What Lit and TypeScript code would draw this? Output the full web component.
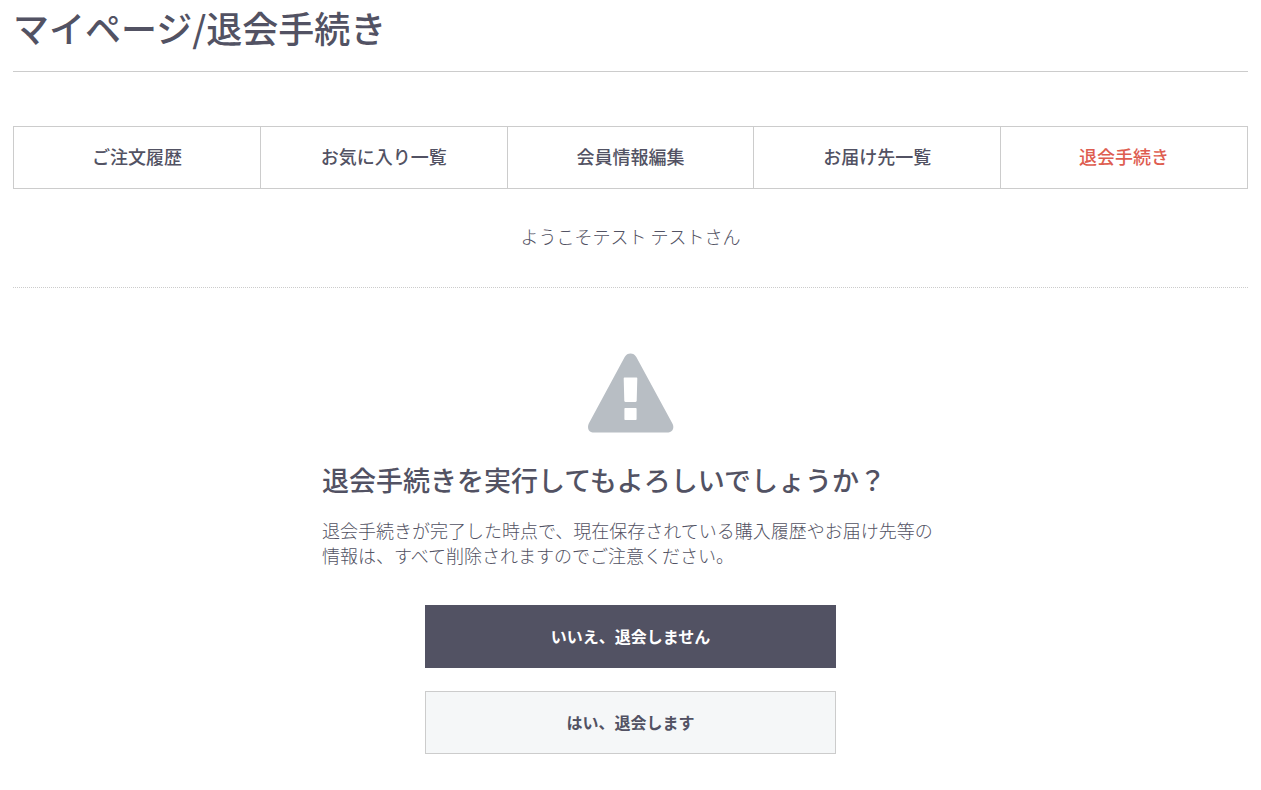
import { LitElement, html, css } from "lit";
import { customElement } from "lit/decorators.js";
import { classMap } from "lit/directives/class-map.js";

const NAV_ITEMS = [
  { label: "ご注文履歴", current: false },
  { label: "お気に入り一覧", current: false },
  { label: "会員情報編集", current: false },
  { label: "お届け先一覧", current: false },
  { label: "退会手続き", current: true },
];

@customElement("app-root")
export class AppRoot extends LitElement {
  static styles = css`
    :host {
      display: block;
      background: #fff;
      color: #525263;
      font-family: "Noto Sans CJK JP", sans-serif;
      font-size: 18px;
    }
    .page {
      padding: 0 13px 36px;
    }
    .title {
      margin: 0;
      padding-bottom: 16px;
      border-bottom: 1px solid #ccc;
      font-size: 36px;
      font-weight: 500;
      line-height: 55px;
    }
    .nav {
      display: flex;
      margin: 54px 0 0;
      padding: 0;
      list-style: none;
      border: 1px solid #ccc;
    }
    .item {
      flex: 1;
    }
    .item + .item {
      border-left: 1px solid #ccc;
    }
    .link {
      display: block;
      padding: 17px 0 20px;
      color: inherit;
      text-align: center;
      text-decoration: none;
      font-weight: 500;
      line-height: 24px;
    }
    .link.current {
      color: #de5d50;
    }
    .welcome {
      margin: 0;
      padding: 35px 0 39px;
      border-bottom: 1px dotted #ccc;
      text-align: center;
      font-weight: 300;
      line-height: 24px;
    }
    .confirm {
      display: flex;
      flex-direction: column;
      align-items: center;
      max-width: 617px;
      margin: 0 auto;
      padding-top: 65px;
    }
    .icon {
      display: block;
      width: 86px;
      height: 80px;
    }
    .question {
      align-self: stretch;
      margin: 27px 0 18px;
      font-size: 27px;
      font-weight: 500;
      line-height: 40px;
    }
    .note {
      align-self: stretch;
      margin: 0 0 37px;
      font-weight: 300;
      line-height: 25px;
    }
    .button {
      box-sizing: border-box;
      width: 411px;
      max-width: 100%;
      height: 63px;
      margin: 0 0 23px;
      padding: 0 0 2px;
      border: 1px solid #525263;
      border-radius: 0;
      background: #525263;
      color: #fff;
      font-family: inherit;
      font-size: 16px;
      font-weight: 700;
      cursor: pointer;
    }
    .button.light {
      border-color: #ccc;
      background: #f5f7f8;
      color: #525263;
    }
  `;

  render() {
    return html`
      <main class="page">
        <h1 class="title">マイページ/退会手続き</h1>
        <nav>
          <ul class="nav">
            ${NAV_ITEMS.map(
              (item) => html`<li class="item">
                <a class=${classMap({ link: true, current: item.current })} href="#">${item.label}</a>
              </li>`
            )}
          </ul>
        </nav>
        <p class="welcome">ようこそテスト テストさん</p>
        <section class="confirm">
          <svg class="icon" viewBox="0 0 86 80" aria-hidden="true">
            <path
              fill="#b8bec4"
              fill-rule="evenodd"
              d="M36.700 4C38.200 1.500 40 .4 42.500 .4S46.800 1.500 48.300 4L84.400 70.500C85.700 73 85.600 75.400 84.400 77.200S81.300 79.500 78.700 79.500H6.300C3.700 79.500 1.800 79 .8 77.200S-.300 73 .8 70.500ZM36.400 24.600C35.900 24.600 35.700 25 35.700 25.600L36.300 47.800C36.300 48.500 36.800 48.900 37.400 48.900H47.600C48.200 48.900 48.700 48.500 48.700 47.800L49.300 25.600C49.300 25 49.100 24.600 48.600 24.600ZM37.400 55C36.800 55 36.400 55.400 36.400 56V66C36.400 66.600 36.800 67 37.400 67H47.600C48.200 67 48.600 66.600 48.600 66V56C48.600 55.400 48.200 55 47.600 55Z"
            />
          </svg>
          <h2 class="question">退会手続きを実行してもよろしいでしょうか？</h2>
          <p class="note">退会手続きが完了した時点で、現在保存されている購入履歴やお届け先等の情報は、すべて削除されますのでご注意ください。</p>
          <button class="button" type="button">いいえ、退会しません</button>
          <button class="button light" type="button">はい、退会します</button>
        </section>
      </main>
    `;
  }
}
